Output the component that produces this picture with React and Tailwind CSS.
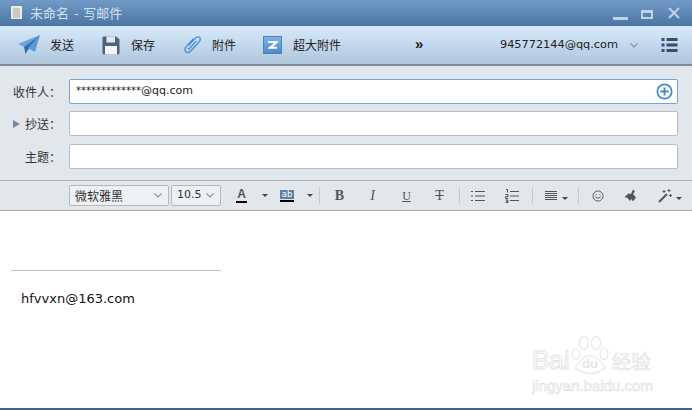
const cjk = "font-['Noto_Sans_CJK_SC','Liberation_Sans',sans-serif]";
const dejavu = "font-['DejaVu_Sans','Noto_Sans_CJK_SC',sans-serif]";

function Caret({ className = "" }) {
  return <div className={`w-0 h-0 border-x-[3px] border-x-transparent border-t-[3.5px] border-t-[#444] ${className}`} />;
}

function Chevron({ className = "" }) {
  return (
    <svg width="8" height="5" viewBox="0 0 8 5" className={className}>
      <path d="M0.5 0.5 L4 4 L7.5 0.5" fill="none" stroke="#8a8f96" strokeWidth="1.1" />
    </svg>
  );
}

function Sep() {
  return <div className="w-px h-[17px] bg-[#c3c9cf] border-r border-white/60 box-content" />;
}

function SendIcon() {
  return (
    <svg width="24" height="20" viewBox="0 0 24 20">
      <path d="M23 0 L1 9 L7 12 Z" fill="#6aa6de" />
      <path d="M23 0 L7 12 L8.5 19 L11.5 14 Z" fill="#2f6fae" />
      <path d="M23 0 L11 13 L18 17 Z" fill="#5b9ad6" />
    </svg>
  );
}

function SaveIcon() {
  return (
    <svg width="18" height="19" viewBox="0 0 18 19">
      <path d="M1.5 0.5 H14 L17.5 3.5 V17 Q17.5 18.5 16 18.5 H2 Q0.5 18.5 0.5 17 V2 Q0.5 0.5 1.5 0.5 Z" fill="#4d6379" />
      <rect x="4.5" y="0.5" width="8.5" height="6" fill="#dfeaf5" />
      <rect x="3" y="10" width="12" height="8.5" fill="#f2f7fb" />
    </svg>
  );
}

function ClipIcon() {
  return (
    <svg width="19" height="20" viewBox="0 0 19 20">
      <path
        d="M6 10 L12.5 3 Q15 1 16.7 2.6 Q18.3 4.5 16 7 L8 15.8 Q5 18.6 2.8 16.8 Q0.8 14.6 3.4 11.4 L10 4.2 M13 6.4 L6.8 13.2 Q5.8 14.2 5.2 13.6"
        fill="none"
        stroke="#4a90d6"
        strokeWidth="1.4"
        strokeLinecap="round"
      />
    </svg>
  );
}

function BigAttachIcon() {
  return (
    <div className="w-[19px] h-[18px] bg-gradient-to-b from-[#7fb2e2] to-[#4a8dcc] border border-[#4a84bd] flex items-center justify-center">
      <svg width="11" height="8" viewBox="0 0 11 8">
        <path d="M1 1 H10 L3 6.8 H10" fill="none" stroke="#fff" strokeWidth="2" />
      </svg>
    </div>
  );
}

function ToolItem({ icon, label, iconW, gap }) {
  return (
    <div className={`flex items-center ${gap}`}>
      <div className={`flex justify-center ${iconW}`}>{icon}</div>
      <span className={`${cjk} text-[12px] text-[#222]`}>{label}</span>
    </div>
  );
}

function Field({ label, arrow, focused, children, labelClass = "", className = "" }) {
  return (
    <div className={`flex items-center h-[25px] ${className}`}>
      <div className="w-[69px] flex items-center shrink-0 relative">
        {arrow && <div className="absolute left-[13px] top-[5px] w-0 h-0 border-y-[4.5px] border-y-transparent border-l-[7px] border-l-[#7189a3]" />}
        <span className={`${cjk} text-[12px] text-[#333] whitespace-nowrap ${labelClass}`}>{label}</span>
      </div>
      <div
        className={`w-[609px] h-full rounded-[2px] bg-white flex items-center justify-between pl-[6px] pr-[4px] border ${
          focused ? "border-[#6fa5e0]" : "border-[#b9bdc1]"
        }`}
      >
        {children}
      </div>
    </div>
  );
}

export default function App() {
  return (
    <div className="w-[692px] h-[410px] flex flex-col overflow-hidden bg-white relative">
      {/* title bar */}
      <div className="h-[26px] shrink-0 bg-gradient-to-b from-[#729ac6] to-[#4a76a5] flex items-center pl-[11px] pr-[12px]">
        <svg width="11" height="13" viewBox="0 0 11 13" className="mr-[8px] mt-[-1px]">
          <path d="M0 0 H11 V13 H1 Q0 13 0 12 Z" fill="#ecece6" />
          <path d="M2 3 H9 M2 5 H9 M2 7 H9 M2 9 H9 M2 11 H9" stroke="#a8a8a2" strokeWidth="1" />
        </svg>
        <span className={`${cjk} text-[13px] text-[#d5e2ef] [word-spacing:2px]`}>未命名 - 写邮件</span>
        <div className="ml-auto flex items-center">
          <div className="w-[15px] h-[3px] bg-[#c0d3e6] mt-[10px]" />
          <div className="w-[12px] h-[9px] border-2 border-[#c0d3e6] border-t-[3px] mt-[2px] ml-[13px]" />
          <svg width="12" height="12" viewBox="0 0 12 12" className="ml-[15px]">
            <path d="M1 1 L11 11 M11 1 L1 11" stroke="#c0d3e6" strokeWidth="2" />
          </svg>
        </div>
      </div>

      {/* main toolbar */}
      <div className="h-[40px] shrink-0 bg-gradient-to-b from-[#d8eafa] to-[#afc6dd] border-b-2 border-b-[#7d8b9a] flex items-center">
        <div className="flex items-center pl-[17px]">
          <ToolItem icon={<SendIcon />} label="发送" iconW="w-[24px]" gap="gap-[9px]" />
          <div className="w-[28px]" />
          <ToolItem icon={<SaveIcon />} label="保存" iconW="w-[18px]" gap="gap-[11px]" />
          <div className="w-[28px]" />
          <ToolItem icon={<ClipIcon />} label="附件" iconW="w-[19px]" gap="gap-[10px]" />
          <div className="w-[27px]" />
          <ToolItem icon={<BigAttachIcon />} label="超大附件" iconW="w-[19px]" gap="gap-[11px]" />
        </div>
        <span className="ml-[74px] text-[15px] font-bold text-[#222] font-['Liberation_Sans',sans-serif] mt-[-1px]">»</span>
        <span className={`${dejavu} ml-auto text-[11.3px] text-[#222] mt-[1px]`}>945772144@qq.com</span>
        <Chevron className="ml-[12px]" />
        <svg width="17" height="14" viewBox="0 0 16 14" className="ml-[23px] mr-[14px]">
          <path d="M0 0 H3 V3 H0 Z M5 0 H16 V3 H5 Z M0 5.5 H3 V8.5 H0 Z M5 5.5 H16 V8.5 H5 Z M0 11 H3 V14 H0 Z M5 11 H16 V14 H5 Z" fill="#33506e" />
        </svg>
      </div>

      {/* address fields */}
      <div className="h-[115px] shrink-0 bg-[#e2e7ec] flex flex-col gap-[7px] pt-[13px] border-b border-b-[#adb2b7]">
        <Field focused label="收件人：" labelClass="pl-[13px]">
          <span className={`${dejavu} text-[11px] text-[#222]`}>
            <span className="text-[10px]">*************</span>@qq.com
          </span>
          <svg width="17" height="17" viewBox="0 0 17 17">
            <circle cx="8.5" cy="8.5" r="7.2" fill="#f4f9fe" stroke="#4a89c4" strokeWidth="1.7" />
            <path d="M8.5 4.5 V12.5 M4.5 8.5 H12.5" stroke="#4a89c4" strokeWidth="1.8" />
          </svg>
        </Field>
        <Field arrow label="抄送：" labelClass="pl-[25px]" />
        <Field label="主题：" labelClass="pl-[25px]" className="mt-[1px]" />
      </div>

      {/* format bar */}
      <div className="h-[30px] shrink-0 bg-[#e2e7ec] border-b border-b-[#a9aeb3] flex items-center pl-[69px]">
        <div className="w-[100px] h-[21px] bg-[#eef0f2] border border-[#b5b9bd] rounded-[2px] flex items-center justify-between pl-[5px] pr-[6px]">
          <span className={`${cjk} text-[12px] text-[#333]`}>微软雅黑</span>
          <Chevron />
        </div>
        <div className="w-[50px] h-[21px] ml-[2px] bg-[#eef0f2] border border-[#b5b9bd] rounded-[2px] flex items-center justify-between pl-[5px] pr-[6px]">
          <span className={`${dejavu} text-[11px] text-[#333]`}>10.5</span>
          <Chevron />
        </div>

        <div className="ml-[15px] w-[11px] flex flex-col items-center">
          <span className="font-['Liberation_Sans',sans-serif] font-bold text-[12px] leading-[11px] text-[#555]">A</span>
          <div className="w-[11px] h-[2px] bg-black mt-[1px]" />
        </div>
        <Caret className="ml-[15px]" />
        <div className="ml-[12px] w-[14px] flex flex-col items-center">
          <div className="w-[14px] h-[9px] bg-[#5d7fa3] text-white text-[8.5px] leading-[9px] text-center font-['DejaVu_Sans',sans-serif]">ab</div>
          <div className="w-[14px] h-[2px] bg-black mt-[1px]" />
        </div>
        <Caret className="ml-[13px]" />
        <div className="ml-[6px]"><Sep /></div>

        <div className="flex items-center text-[#555]">
          <span className="w-[37px] text-center font-['Liberation_Serif',serif] font-bold text-[14px]">B</span>
          <span className="w-[29px] text-center font-['Liberation_Serif',serif] italic text-[14px]">I</span>
          <span className="w-[39px] text-center font-['Liberation_Serif',serif] text-[12px] underline">U</span>
          <span className="w-[27px] text-center font-['Liberation_Serif',serif] text-[14px] line-through">T</span>
        </div>
        <div className="ml-[6px]"><Sep /></div>

        <svg width="14" height="12" viewBox="0 0 14 12" className="ml-[10px]">
          <path d="M0 1.5 H2 M0 6 H2 M0 10.5 H2 M4 1.5 H14 M4 6 H14 M4 10.5 H14" stroke="#555" strokeWidth="1" />
        </svg>
        <svg width="14" height="14" viewBox="0 0 14 14" className="ml-[20px]">
          <path d="M1 0.5 H2.5 V3.5 M0.5 5.5 H3 V7.5 H0.5 V9.5 H3 M0.5 11 H3 V13.5 H0.5 M1 12.2 H3 M5 2.5 H14 M5 7 H14 M5 11.5 H14" fill="none" stroke="#555" strokeWidth="1" />
        </svg>
        <div className="ml-[13px]"><Sep /></div>

        <svg width="12" height="10" viewBox="0 0 12 10" className="ml-[11px]">
          <path d="M0 .5 H12 M0 2.5 H12 M0 4.5 H12 M0 6.5 H12 M0 8.5 H12" stroke="#555" strokeWidth="1" />
        </svg>
        <Caret className="ml-[5px] mt-[6px]" />
        <div className="ml-[10px]"><Sep /></div>

        <svg width="12" height="12" viewBox="0 0 13 13" className="ml-[12px]">
          <circle cx="6.5" cy="6.5" r="5.5" fill="none" stroke="#555" strokeWidth="1" />
          <path d="M4.5 4.5 V5.5 M8.5 4.5 V5.5" stroke="#555" strokeWidth="1" />
          <path d="M3.5 7.5 Q6.5 10.5 9.5 7.5" fill="none" stroke="#555" strokeWidth="1" />
        </svg>
        <svg width="13" height="13" viewBox="0 0 13 13" className="ml-[20px]">
          <path d="M9 0.5 L11 2.5 L9 5 L12 8.5 L9 12.5 L7.5 10 L6 12 L3.5 9 L0.5 8 L4.5 4.5 L7 5 Z" fill="#555" />
        </svg>
        <svg width="15" height="14" viewBox="0 0 15 14" className="ml-[21px]">
          <path d="M1 13 L9 5" stroke="#555" strokeWidth="2" />
          <path d="M6 1 V4 M4.5 2.5 H7.5 M11 0 V3 M9.5 1.5 H12.5 M12.5 5 V8 M11 6.5 H14" stroke="#555" strokeWidth="1" />
        </svg>
        <Caret className="ml-[3px] mt-[5px]" />
      </div>

      {/* editor */}
      <div className="flex-1 bg-white pt-[59px] pl-[11px] relative">
        <div className="w-[210px] h-px bg-[#b6c2d6]" />
        <div className={`${dejavu} text-[13px] leading-[16px] text-[#111] mt-[20px] ml-[10px]`}>hfvvxn@163.com</div>

        {/* watermark */}
        <div className="absolute left-[532px] top-[124px] select-none">
          <div className="flex items-end">
            <span className="font-['Liberation_Sans',sans-serif] text-white [-webkit-text-stroke:1px_#e4e4e4] text-[26px] leading-[26px]">Bai</span>
            <svg width="38" height="40" viewBox="0 0 38 40" className="mb-[-2px] ml-[1px]">
              <g fill="none" stroke="#e6e6e6" strokeWidth="1.2">
                <ellipse cx="13" cy="8" rx="4.5" ry="6.5" />
                <ellipse cx="25" cy="8" rx="4.5" ry="6.5" />
                <ellipse cx="5" cy="19" rx="4" ry="5.5" />
                <ellipse cx="33" cy="19" rx="4" ry="5.5" />
                <path d="M4 33 Q19 8 34 33 Q19 44 4 33 Z" />
              </g>
              <text x="19" y="33" textAnchor="middle" fontSize="13" fontWeight="700" fill="#e4e4e4" fontFamily="Liberation Sans">du</text>
            </svg>
            <span className={`${cjk} text-white [-webkit-text-stroke:0.7px_#e2e2e2] text-[19.5px] leading-[24px] ml-[3px]`}>经验</span>
          </div>
          <div className="font-['Liberation_Sans',sans-serif] text-white [-webkit-text-stroke:0.7px_#e2e2e2] text-[15px] leading-[16px] mt-[5px]">jingyan.baidu.com</div>
        </div>
      </div>

      {/* bottom edge */}
      <div className="h-[2px] shrink-0 bg-[#3f668f]" />
    </div>
  );
}
